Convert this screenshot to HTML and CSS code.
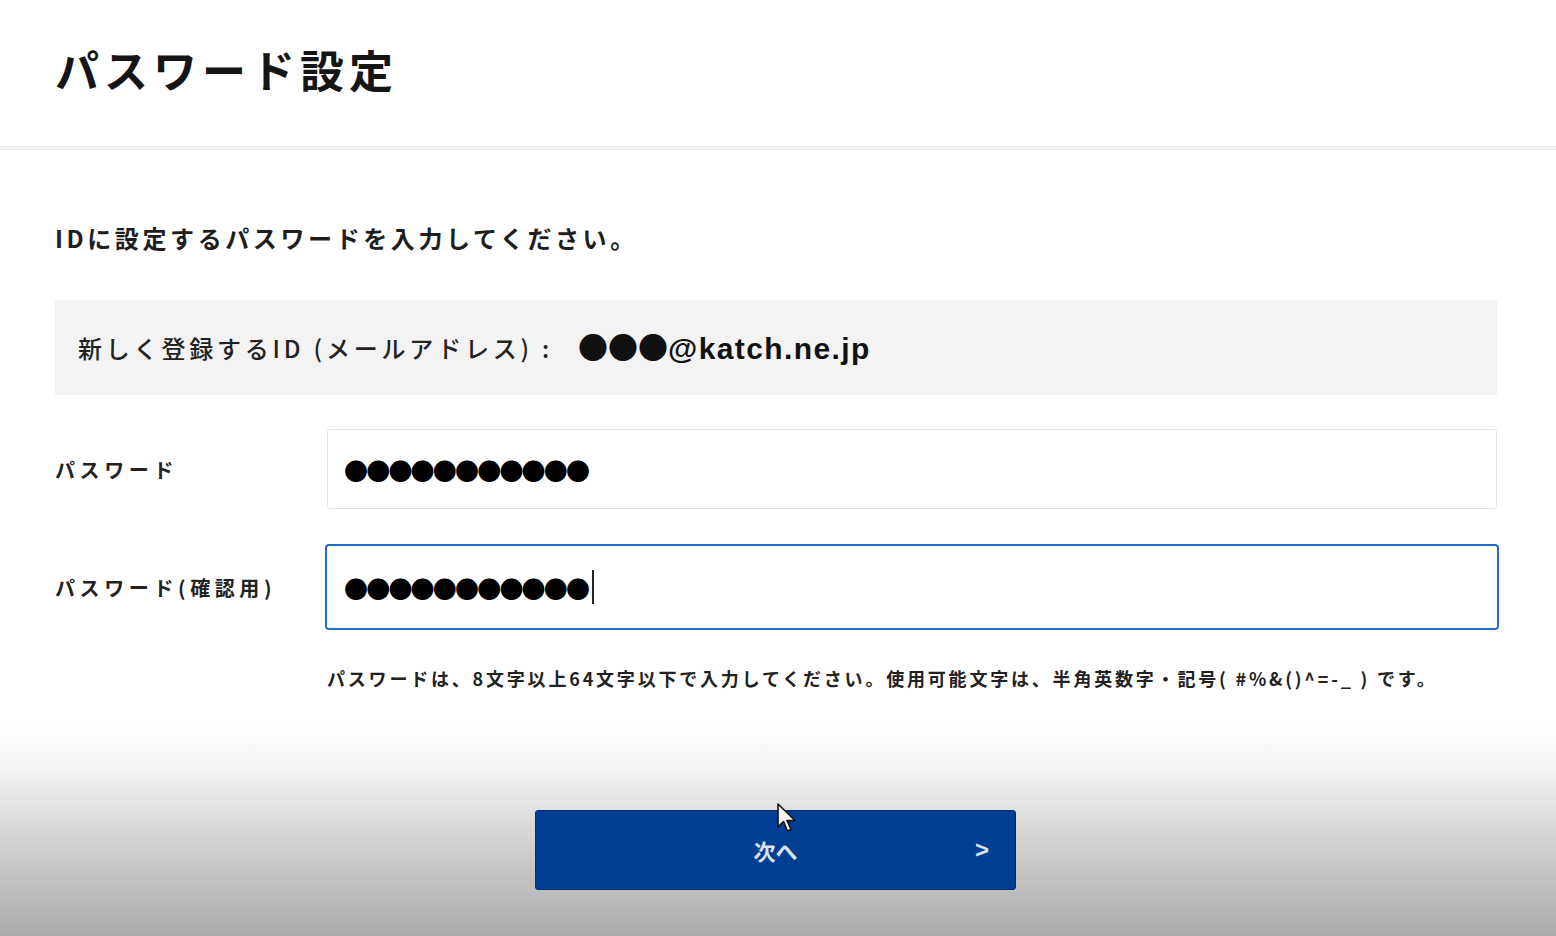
FILE: index.html
```html
<!DOCTYPE html>
<html lang="ja">
<head>
  <meta charset="utf-8">
  <title>パスワード設定</title>
  <link rel="stylesheet" href="styles.css">
</head>
<body>
  <header class="page-header">
    <h1>パスワード設定</h1>
  </header>

  <main class="container">
    <p class="lead">IDに設定するパスワードを入力してください。</p>

    <div class="id-box">
      <span class="id-label">新しく登録するID (メールアドレス) :</span>
      <span class="id-value"><span class="dots">●●●</span>@katch.ne.jp</span>
    </div>

    <div class="form-row">
      <label class="row-label">パスワード</label>
      <div class="field">
        <span class="mask">●●●●●●●●●●●</span>
      </div>
    </div>

    <div class="form-row">
      <label class="row-label">パスワード(確認用)</label>
      <div class="field field-focus">
        <span class="mask">●●●●●●●●●●●</span><span class="caret"></span>
      </div>
    </div>

    <p class="hint">パスワードは、8文字以上64文字以下で入力してください。使用可能文字は、半角英数字・記号( #%&amp;()^=-_ ) です。</p>
  </main>

  <footer class="page-footer">
    <button class="next-btn" type="button">
      <span class="next-text">次へ</span>
      <span class="next-arrow">&gt;</span>
    </button>
    <!-- マウスカーソル -->
    <svg class="cursor" width="22" height="32" viewBox="0 0 22 32">
      <path d="M1 1 L1 24 L6.5 18.5 L10.5 28 L14 26.5 L10 17.5 L18 17.5 Z" fill="#f4f4f4" stroke="#111" stroke-width="1.6" stroke-linejoin="round"/>
    </svg>
  </footer>
</body>
</html>
```

FILE: styles.css
```css
body {
  margin: 0;
  padding: 0;
  font-family: "Noto Sans CJK JP", "Noto Sans", sans-serif;
  color: #1e1e1e;
  background: #fff;
  height: 936px;
  display: flex;
  flex-direction: column;
  overflow: hidden;
}

.page-header {
  height: 150px;
  border-bottom: 4px solid #efefef;
  display: flex;
  align-items: center;
  padding-left: 55px;
  box-sizing: border-box;
  flex-shrink: 0;
}

.page-header h1 {
  margin: 0;
  font-size: 44px;
  font-weight: 700;
  letter-spacing: 5px;
  color: #151515;
  padding-bottom: 8px;
}

.container {
  padding: 0 59px 0 55px;
  flex: 1;
}

.lead {
  margin: 68px 0 0;
  font-size: 24px;
  font-weight: 700;
  letter-spacing: 3.6px;
  line-height: 40px;
}

.id-box {
  margin-top: 42px;
  height: 95px;
  background: #f3f3f3;
  display: flex;
  align-items: center;
  padding-left: 23px;
}

.id-label {
  font-size: 24px;
  font-weight: 500;
  letter-spacing: 3.8px;
  color: #222;
  width: 500px;
}

.id-value {
  font-family: "Liberation Sans", sans-serif;
  font-size: 30px;
  font-weight: 700;
  letter-spacing: 1.4px;
  color: #111;
  margin-top: -4px;
}

.id-value .dots {
  font-family: "Noto Sans CJK JP", sans-serif;
  letter-spacing: 0;
}

.form-row {
  display: flex;
  align-items: center;
  margin-top: 34px;
}

.form-row + .form-row {
  margin-top: 35px;
}

.row-label {
  width: 272px;
  font-size: 20px;
  font-weight: 700;
  letter-spacing: 4.6px;
  color: #222;
}

.row-label + .field-focus {
  margin-left: -2px;
}

.field {
  flex: 1;
  height: 80px;
  box-sizing: border-box;
  border: 1px solid #e4e4e4;
  border-radius: 3px;
  display: flex;
  align-items: center;
  padding-left: 16px;
}

.field-focus {
  height: 86px;
  border: 2px solid #1f6bd0;
  border-radius: 4px;
  margin-right: -2px;
  padding-left: 17px;
}

.mask {
  font-family: "Noto Sans CJK JP", sans-serif;
  font-size: 24px;
  letter-spacing: -1.8px;
  color: #000;
}

.caret {
  display: inline-block;
  width: 2px;
  height: 34px;
  background: #222;
  margin-left: 4px;
}

.hint {
  margin: 35px 0 0 272px;
  font-size: 18px;
  font-weight: 700;
  letter-spacing: 2.8px;
  color: #222;
}

.page-footer {
  position: relative;
  height: 211px;
  flex-shrink: 0;
  background: linear-gradient(#fff 0%, #f4f4f4 20%, #dcdcdc 45%, #c4c4c4 70%, #acacac 100%);
  display: flex;
  justify-content: center;
  padding-top: 85px;
  box-sizing: border-box;
}

.next-btn {
  width: 481px;
  height: 80px;
  margin-left: -5px;
  background: #003f94;
  border: 1px solid #00306f;
  border-radius: 3px;
  color: #d9e1ec;
  font-family: "Noto Sans CJK JP", sans-serif;
  font-size: 22px;
  font-weight: 700;
  position: relative;
  cursor: pointer;
}

.next-arrow {
  position: absolute;
  right: 26px;
  top: 50%;
  transform: translateY(-50%);
  font-family: "Liberation Sans", sans-serif;
  font-size: 24px;
}

.cursor {
  position: absolute;
  left: 777px;
  top: 78px;
}
```
